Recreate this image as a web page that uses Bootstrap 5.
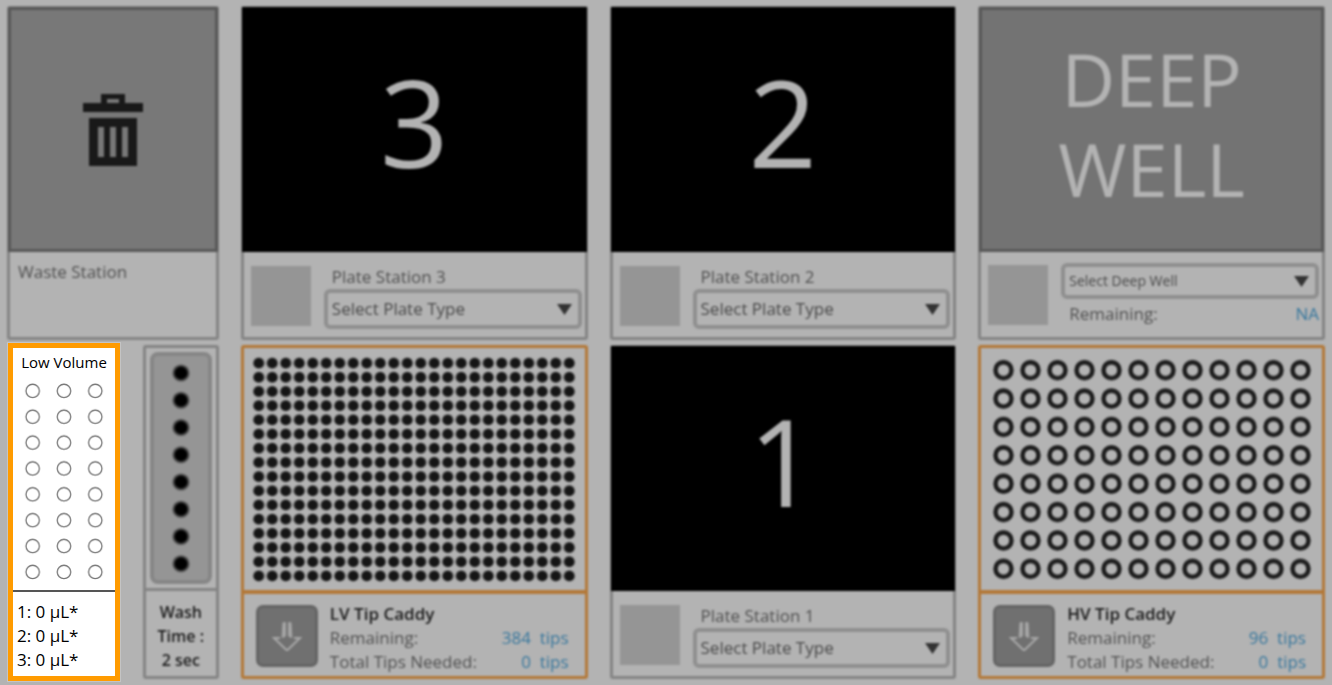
<!DOCTYPE html>
<html lang="en">
<head>
<meta charset="utf-8">
<meta name="viewport" content="width=device-width, initial-scale=1">
<title>Deck Layout</title>
<link href="https://cdn.jsdelivr.net/npm/bootstrap@5.3.0/dist/css/bootstrap.min.css" rel="stylesheet">
<style>
  body { background: #b3b3b3; color: #111; font-family: "Open Sans", "Noto Sans", sans-serif; font-size: 17px; line-height: 24px; }
  .deck { display: grid; grid-template-columns: 212fr 347fr 347fr 347fr; grid-template-rows: 1fr 1fr; gap: 5px 22px; padding: 6px 7px; }
  .dimmed { filter: blur(1px); }
  .station { border: 3px solid #848484; border-radius: 3px; }
  .station .face { min-height: 180px; }
  .face-grey { background: #737373; border: 3px solid #585858; margin: -2px -2px 0; }
  .face-waste { background: #787878; }
  .face-black { background: #000; color: #b3b3b3; margin: -2px -2px 0; padding-bottom: 16px; font-size: 120px; line-height: 120px; }
  .face-deep { color: #b3b3b3; font-size: 74px; line-height: 90px; padding-bottom: 12px; }
  .foot { height: 85px; color: #505050; }
  .foot-plate { gap: 13px; padding: 0 3px 8px 7px; }
  .foot-plate .swatch { margin-bottom: 3px; }
  .foot-deep { gap: 13px; padding: 0 3px 0 7px; }
  .foot-caddy { padding: 2px 16px 0 12px; }
  .swatch { width: 60px; height: 60px; background: #959595; }
  .picker { appearance: none; width: 100%; height: 40px; color: #484848; border: 4px solid #8f8f8f; border-radius: 6px; padding: 0 24px 0 4px;
    background: #b3b3b3 url("data:image/svg+xml,%3Csvg xmlns='http://www.w3.org/2000/svg' viewBox='0 0 15 11'%3E%3Cpath d='M0 0h15l-7.500 11z' fill='%23333'/%3E%3C/svg%3E") no-repeat right 6px center / 15px 11px; }
  .picker-sm { height: 36px; font-size: 14px; margin-bottom: 3px; }
  .caddy { border-color: #b37838; }
  .caddy .face { border-bottom: 4px solid #b37838; }
  .caddy .foot { height: 82px; }
  .strong-text { color: #1b1b1b; font-weight: 600; }
  .eject { width: 62px; height: 62px; background: #707070; border: 3px solid #646464; border-radius: 7px; }
  .amount { color: #37779d; white-space: pre; }
  .reservoir { width: 112px; margin: -2px 0 -2px 1px; background: #fff; color: #000; border: 5px solid #ff9b00; outline: 1px solid #c4c4c4; }
  .reservoir-title { font-weight: 500; font-size: 15px; padding-top: 2px; }
  .reservoir-wells { padding-bottom: 2px; }
  .reservoir-list { height: 86px; border-top: 2px solid #555; }
  .wash { width: 76px; font-size: 16px; }
  .wash .face { border-bottom: 3px solid #848484; padding: 4px; }
  .wash .foot { padding-top: 9px; }
  .basin { background: #959595; border: 4px solid #868686; border-radius: 8px; }
</style>
</head>
<body>
<svg width="0" height="0" class="position-absolute" aria-hidden="true">
  <symbol id="eject-arrow" viewBox="0 0 30 30">
    <path d="M11 1.500h2.500V14c0 1.500-1 2.500-3.500 2.500zM19 1.500h-2.500V14c0 1.500 1 2.500 3.500 2.500z" fill="#a8a8a8" stroke="#a0a0a0" stroke-width="1"/>
    <path d="M8 17H2L15 29.500 28 17h-6" stroke="#a8a8a8" stroke-width="2" fill="none"/>
  </symbol>
</svg>
<main class="deck min-vh-100">

  <section class="station dimmed d-flex flex-column">
    <div class="face face-grey face-waste flex-fill d-flex align-items-center justify-content-center">
      <svg width="60" height="72" viewBox="0 0 60 72" fill="#191919" role="img" aria-label="Waste">
        <path fill-rule="evenodd" d="M18 9V0h24v9h18v9H0V9zM24 5v4h12V5zM6 24h48v48H6zM15 33v30h6V33zM27 33v30h6V33zM39 33v30h6V33z"/>
      </svg>
    </div>
    <div class="foot px-2 pt-2">Waste Station</div>
  </section>

  <section class="station dimmed d-flex flex-column">
    <div class="face face-black flex-fill d-flex align-items-center justify-content-center">3</div>
    <div class="foot foot-plate d-flex align-items-end">
      <div class="swatch flex-shrink-0"></div>
      <div class="flex-fill">
        <label for="plate3" class="d-block ps-2">Plate Station 3</label>
        <select id="plate3" class="picker"><option>Select Plate Type</option></select>
      </div>
    </div>
  </section>

  <section class="station dimmed d-flex flex-column">
    <div class="face face-black flex-fill d-flex align-items-center justify-content-center">2</div>
    <div class="foot foot-plate d-flex align-items-end">
      <div class="swatch flex-shrink-0"></div>
      <div class="flex-fill">
        <label for="plate2" class="d-block ps-2">Plate Station 2</label>
        <select id="plate2" class="picker"><option>Select Plate Type</option></select>
      </div>
    </div>
  </section>

  <section class="station dimmed d-flex flex-column">
    <div class="face face-grey face-deep flex-fill d-flex align-items-center justify-content-center text-center">DEEP<br>WELL</div>
    <div class="foot foot-deep d-flex align-items-center">
      <div class="swatch flex-shrink-0"></div>
      <div class="flex-fill">
        <select id="deep" class="picker picker-sm" aria-label="Deep well"><option>Select Deep Well</option></select>
        <div class="d-flex justify-content-between ps-2"><span>Remaining:</span><span class="amount">NA</span></div>
      </div>
    </div>
  </section>

  <div class="d-flex justify-content-between">
    <section class="reservoir d-flex flex-column">
      <div class="reservoir-title text-center">Low Volume</div>
      <div class="reservoir-wells flex-fill d-flex align-items-center justify-content-center">
        <svg width="94" height="207" viewBox="0 0 94 207" aria-hidden="true">
          <defs><pattern id="wells" width="31.330" height="25.870" patternUnits="userSpaceOnUse"><circle cx="15.660" cy="12.900" r="6.700" fill="#fff" stroke="#777" stroke-width="1.300"/></pattern></defs>
          <rect width="94" height="207" fill="url(#wells)"/>
        </svg>
      </div>
      <div class="reservoir-list ps-1 pt-2">
        <div>1: 0 µL*</div><div>2: 0 µL*</div><div>3: 0 µL*</div>
      </div>
    </section>
    <section class="station wash dimmed d-flex flex-column">
      <div class="face flex-fill d-flex">
        <div class="basin flex-fill d-flex align-items-center justify-content-center">
          <svg width="20" height="218" viewBox="0 0 20 218" aria-hidden="true">
            <defs><pattern id="ports" width="20" height="27.250" patternUnits="userSpaceOnUse"><circle cx="10" cy="14" r="8.500" fill="#484848"/><circle cx="10" cy="14" r="6.500" fill="#000"/></pattern></defs>
            <rect width="20" height="218" fill="url(#ports)"/>
          </svg>
        </div>
      </div>
      <div class="foot strong-text text-center">Wash<br>Time :<br>2 sec</div>
    </section>
  </div>

  <section class="station caddy dimmed d-flex flex-column">
    <div class="face flex-fill d-flex align-items-center justify-content-center">
      <svg width="324" height="227" viewBox="0 0 324 227" aria-hidden="true">
        <defs><pattern id="lv" width="13.500" height="14.187" patternUnits="userSpaceOnUse"><circle cx="6.750" cy="7.090" r="5.500" fill="#151515"/></pattern></defs>
        <rect width="324" height="227" fill="url(#lv)"/>
      </svg>
    </div>
    <div class="foot foot-caddy d-flex align-items-center">
      <button type="button" class="eject p-0 flex-shrink-0 me-2 d-flex align-items-center justify-content-center" aria-label="Eject LV tips"><svg width="30" height="30"><use href="#eject-arrow"/></svg></button>
      <div class="flex-fill ps-1 pt-1">
        <div class="strong-text">LV Tip Caddy</div>
        <div class="d-flex justify-content-between"><span>Remaining:</span><span class="amount">384  tips</span></div>
        <div class="d-flex justify-content-between"><span>Total Tips Needed:</span><span class="amount">0  tips</span></div>
      </div>
    </div>
  </section>

  <section class="station dimmed d-flex flex-column">
    <div class="face face-black flex-fill d-flex align-items-center justify-content-center">1</div>
    <div class="foot foot-plate d-flex align-items-end">
      <div class="swatch flex-shrink-0"></div>
      <div class="flex-fill">
        <label for="plate1" class="d-block ps-2">Plate Station 1</label>
        <select id="plate1" class="picker"><option>Select Plate Type</option></select>
      </div>
    </div>
  </section>

  <section class="station caddy dimmed d-flex flex-column">
    <div class="face flex-fill d-flex align-items-center justify-content-center">
      <svg width="324" height="227" viewBox="0 0 324 227" aria-hidden="true">
        <defs><pattern id="hv" width="27" height="28.375" patternUnits="userSpaceOnUse"><circle cx="13.500" cy="14.190" r="8" fill="none" stroke="#1c1c1c" stroke-width="4.500"/></pattern></defs>
        <rect width="324" height="227" fill="url(#hv)"/>
      </svg>
    </div>
    <div class="foot foot-caddy d-flex align-items-center">
      <button type="button" class="eject p-0 flex-shrink-0 me-2 d-flex align-items-center justify-content-center" aria-label="Eject HV tips"><svg width="30" height="30"><use href="#eject-arrow"/></svg></button>
      <div class="flex-fill ps-1 pt-1">
        <div class="strong-text">HV Tip Caddy</div>
        <div class="d-flex justify-content-between"><span>Remaining:</span><span class="amount">96  tips</span></div>
        <div class="d-flex justify-content-between"><span>Total Tips Needed:</span><span class="amount">0  tips</span></div>
      </div>
    </div>
  </section>
</main>
<script src="https://cdn.jsdelivr.net/npm/bootstrap@5.3.0/dist/js/bootstrap.bundle.min.js"></script>
</body>
</html>
